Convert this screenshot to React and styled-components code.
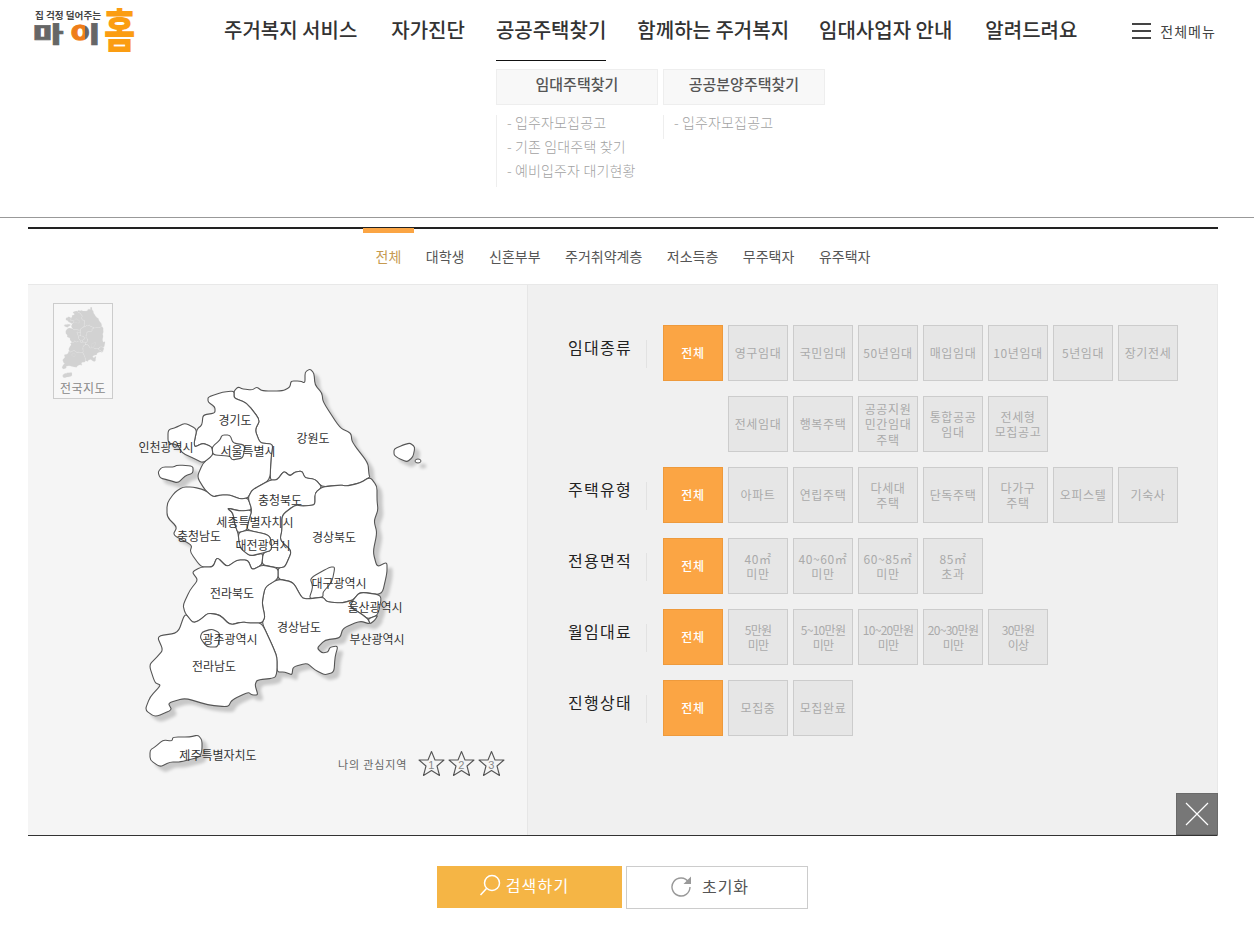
import { createGlobalStyle, styled } from "styled-components";

const GlobalStyle = createGlobalStyle`
  html, body {
    margin: 0;
    padding: 0;
    background: #fff;
    font-family: "Noto Sans CJK KR", "Noto Sans", sans-serif;
  }
  * { box-sizing: border-box; }
  ul { list-style: none; margin: 0; padding: 0; }
`;

const navItems = [
  { name: "주거복지 서비스", gap: 0 },
  { name: "자가진단", gap: 34 },
  { name: "공공주택찾기", gap: 31 },
  { name: "함께하는 주거복지", gap: 31 },
  { name: "임대사업자 안내", gap: 30 },
  { name: "알려드려요", gap: 33 },
];
const subMenus = [
  { title: "임대주택찾기", items: ["입주자모집공고", "기존 임대주택 찾기", "예비입주자 대기현황"] },
  { title: "공공분양주택찾기", items: ["입주자모집공고"] },
];
const tabs = ["전체", "대학생", "신혼부부", "주거취약계층", "저소득층", "무주택자", "유주택자"];

const filters = [
  { label: "임대종류", options: ["전체", "영구임대", "국민임대", "50년임대", "매입임대", "10년임대", "5년임대", "장기전세", "전세임대", "행복주택", "공공지원\n민간임대\n주택", "통합공공\n임대", "전세형\n모집공고"] },
  { label: "주택유형", options: ["전체", "아파트", "연립주택", "다세대\n주택", "단독주택", "다가구\n주택", "오피스텔", "기숙사"] },
  { label: "전용면적", options: ["전체", "40㎡\n미만", "40~60㎡\n미만", "60~85㎡\n미만", "85㎡\n초과"] },
  { label: "월임대료", tight: true, options: ["전체", "5만원\n미만", "5~10만원\n미만", "10~20만원\n미만", "20~30만원\n미만", "30만원\n이상"] },
  { label: "진행상태", options: ["전체", "모집중", "모집완료"] },
];

// region outlines, in page coordinates
const regions = [
  "234,391 238,387 243,389 252,390 257,387 262,391 283,391 290,387 291,381 300,381 305,383 305,372 310,369 314,373 315,385 322,393 323,402 340,428 351,433 352,442 368,463 369,475 370,477 360,483 347,486 340,485 322,487 315,479 305,478 302,471 295,472 290,476 284,471 277,480 270,480 271,458 273,444 260,443 255,430 260,420 247,403 234,398",
  "234,391 234,398 247,403 260,420 255,430 260,443 273,444 271,458 270,480 252,490 248,498 240,499 230,495 220,495 213,497 205,490 197,477 203,463 213,455 212,447 203,443 195,447 194,443 197,429 202,425 203,415 215,413 215,407 208,402 208,397 223,392",
  "168,443 168,430 177,427 185,423 197,429 194,443 195,447 203,443 212,447 213,455 203,463 193,458 182,453 178,445",
  "212,447 220,440 222,435 230,435 233,443 245,445 243,458 232,460 230,456 213,455",
  "158,472 162,467 173,467 178,465 193,466 193,473 185,476 178,483 168,480 160,478",
  "205,490 193,487 183,487 175,492 167,503 167,517 177,527 173,535 192,545 190,552 201,567 213,567 217,557 227,567 237,560 248,560 252,570 262,565 263,553 250,556 240,548 238,533 235,525 233,513 227,508 240,511 252,510 248,498 240,499 230,495 220,495 213,497",
  "270,480 277,480 284,471 290,476 295,472 302,471 305,478 315,479 322,487 315,493 315,505 303,506 295,505 282,515 282,530 280,540 292,551 285,567 278,568 262,565 263,553 272,550 270,535 247,530 248,523 252,510 248,498 252,490",
  "227,508 240,511 252,510 248,523 247,530 238,533 235,525 233,513",
  "247,530 270,535 272,550 263,553 250,556 240,548 238,533",
  "322,487 340,485 347,486 360,483 370,477 377,486 377,500 378,510 374,521 377,533 373,552 377,567 387,562 387,573 382,595 360,592 353,600 342,603 327,602 323,597 308,599 302,598 293,582 278,579 278,568 285,567 292,551 280,540 282,530 282,515 295,505 303,506 315,505 315,493",
  "309,599 313,587 310,578 330,567 335,567 332,582 323,592 323,597",
  "353,600 360,592 382,595 378,615 368,619 360,613 350,607",
  "368,619 378,615 375,620 370,624",
  "278,579 293,582 302,598 308,599 323,597 327,602 342,603 353,600 350,607 360,613 368,619 370,624 360,621 343,628 340,638 325,640 317,648 322,653 328,652 330,647 338,646 335,657 334,672 325,675 315,670 307,663 293,667 292,675 285,672 277,672 277,657 273,647 262,623 265,617 262,603 265,587",
  "201,567 213,567 217,557 227,567 237,560 248,560 252,570 262,565 278,568 278,579 265,587 262,603 265,617 262,623 250,623 242,622 230,625 220,615 208,613 200,620 193,623 185,613 183,605 190,590 198,580 192,572",
  "185,613 193,623 200,620 208,613 220,615 230,625 242,622 250,623 262,623 273,647 277,657 277,672 275,678 257,680 255,685 258,695 252,695 248,692 232,700 228,707 208,705 185,698 168,703 172,710 155,717 145,710 150,697 161,685 155,683 149,665 157,657 163,650 157,636 178,633",
  "202,632 212,629 220,633 218,647 207,647 200,638",
  "150,750 155,747 163,740 172,741 173,737 190,737 198,735 202,740 202,750 200,757 180,762 170,762 160,767 150,760",
  "394,449 403,445 410,443 415,447 413,457 407,462 398,458 394,455",
];

// rounds each corner a little so the borders read as a drawn map
function smoothPath(points) {
  const pts = points.split(" ").map((p) => p.split(",").map(Number));
  const along = (a, b, t) => [a[0] + (b[0] - a[0]) * t, a[1] + (b[1] - a[1]) * t].map((v) => v.toFixed(1)).join(" ");
  let d = "";
  pts.forEach((cur, i) => {
    const prev = pts[(i - 1 + pts.length) % pts.length];
    const next = pts[(i + 1) % pts.length];
    d += `${i === 0 ? "M" : "L"}${along(cur, prev, 0.3)}Q${cur[0]} ${cur[1]} ${along(cur, next, 0.3)}`;
  });
  return d + "Z";
}

const mapLabels = [
  ["경기도", 235, 419], ["강원도", 313, 437], ["인천광역시", 166, 446], ["서울특별시", 248, 450],
  ["충청북도", 280, 499], ["세종특별자치시", 255, 521], ["충청남도", 199, 535], ["대전광역시", 263, 544],
  ["경상북도", 334, 536], ["대구광역시", 339, 582], ["울산광역시", 375, 606], ["전라북도", 232, 592],
  ["경상남도", 299, 626], ["부산광역시", 377, 638], ["광주광역시", 230, 638], ["전라남도", 214, 665],
  ["제주특별자치도", 218, 754],
];

export default function App() {
  return (
    <>
      <GlobalStyle />
      <Header>
        <Logo />
        <Nav>
          {navItems.map((item, i) => (
            <NavItem key={item.name} $active={i === 2} $gap={item.gap}>
              {item.name}
              {i === 2 && <SubMenu />}
            </NavItem>
          ))}
        </Nav>
        <AllMenu>
          <Burger><i /><i /><i /></Burger>
          전체메뉴
        </AllMenu>
      </Header>

      <Main>
        <Tabs>
          {tabs.map((t, i) => (
            <Tab key={t} $active={i === 0}>{t}</Tab>
          ))}
        </Tabs>
        <Panels>
          <MapPanel>
            <MiniMap>
              <svg width="45" height="72" viewBox="145 369 243 398">
                {regions.slice(0, -1).map((p) => (
                  <path key={p} d={smoothPath(p)} fill="#d2d2d2" stroke="#e6e6e6" strokeWidth="1.2" />
                ))}
              </svg>
              전국지도
            </MiniMap>
            <MapSvg viewBox="28 285 499 550">
              <MapShapes>
                {regions.map((p) => (
                  <path key={p} d={smoothPath(p)} fill="#fff" stroke="#555" strokeWidth="1.1" />
                ))}
                <ellipse cx="418" cy="461" rx="3" ry="2" fill="#fff" stroke="#555" strokeWidth="1" />
              </MapShapes>
              {mapLabels.map(([name, x, y]) => (
                <MapLabel key={name} x={x} y={y}>{name}</MapLabel>
              ))}
            </MapSvg>
            <Interest>
              나의 관심지역
              <Stars>
                {[1, 2, 3].map((n) => <StarMark key={n} n={n} />)}
              </Stars>
            </Interest>
          </MapPanel>

          <FilterPanel>
            {filters.map((f) => (
              <FilterRow key={f.label}>
                <FilterLabel>{f.label}</FilterLabel>
                <Options>
                  {f.options.map((o, i) => (
                    <Option key={o} $active={i === 0} $tight={f.tight && i > 0}>{o}</Option>
                  ))}
                </Options>
              </FilterRow>
            ))}
            <CloseButton aria-label="닫기">
              <svg width="24" height="24" viewBox="0 0 24 24">
                <path d="M1 1L23 23M23 1L1 23" stroke="#fff" strokeWidth="1.2" />
              </svg>
            </CloseButton>
          </FilterPanel>
        </Panels>

        <Actions>
          <SearchButton>
            <svg width="22" height="22" viewBox="0 0 22 22" fill="none" stroke="#fff" strokeWidth="1.5">
              <circle cx="13" cy="9" r="7.5" />
              <path d="M7.5 14.5L1.5 21" />
            </svg>
            검색하기
          </SearchButton>
          <ResetButton>
            <svg width="22" height="22" viewBox="0 0 22 22" fill="none">
              <path d="M18.5 7A9 9 0 1 0 20 12" stroke="#999" strokeWidth="1.4" />
              <path d="M21 1.5V9H13.5Z" fill="#999" />
            </svg>
            초기화
          </ResetButton>
        </Actions>
      </Main>
    </>
  );
}

function Logo() {
  return (
    <LogoMark width="104" height="52" viewBox="0 0 104 52">
      <defs>
        <linearGradient id="logoI" x1="0" x2="1" y1="0" y2="0">
          <stop offset="0.5" stopColor="#ee7d1a" />
          <stop offset="0.5" stopColor="#666" />
        </linearGradient>
      </defs>
      <LogoCaption x="1" y="14" textLength="66" lengthAdjust="spacingAndGlyphs">집 걱정 덜어주는</LogoCaption>
      <LogoWord transform="translate(-1 37) scale(1.5 1)" fill="#666" stroke="#666">마</LogoWord>
      <LogoWord transform="translate(36 37) scale(1.5 1)" fill="url(#logoI)" stroke="url(#logoI)">이</LogoWord>
      <LogoHome transform="translate(70 42) scale(1 1.35)">홈</LogoHome>
    </LogoMark>
  );
}

function SubMenu() {
  return (
    <SubMenuWrap>
      {subMenus.map((m) => (
        <SubColumn key={m.title}>
          <SubTitle>{m.title}</SubTitle>
          <SubList>
            {m.items.map((it) => <SubItem key={it}>- {it}</SubItem>)}
          </SubList>
        </SubColumn>
      ))}
    </SubMenuWrap>
  );
}

function StarMark({ n }) {
  return (
    <StarWrap>
      <svg width="27" height="27" viewBox="0 0 27 27">
        <path d="M13.5 1.5L17 10H26L19 16L21.5 25.5L13.5 20.5L5.5 25.5L8 16L1 10H10Z" fill="none" stroke="#555" strokeWidth="1.1" strokeLinejoin="round" />
      </svg>
      <StarNum>{n}</StarNum>
    </StarWrap>
  );
}

const Header = styled.header`
  display: flex;
  align-items: flex-start;
  width: calc(100% - 2px);
  height: 218px;
  padding: 5px 0 0 34px;
  border-bottom: 1px solid #999;
`;

const LogoMark = styled.svg`
  flex: none;
  display: block;
  overflow: visible;
`;

const LogoCaption = styled.text`
  font-size: 9px;
  font-weight: 700;
  fill: #444;
`;

const LogoWord = styled.text`
  font-size: 22px;
  font-weight: 900;
  stroke-width: 0.7px;
`;

const LogoHome = styled.text`
  font-size: 34px;
  font-weight: 900;
  fill: #fb9d12;
`;

const Nav = styled.ul`
  display: flex;
  margin-left: 86px;
`;

const NavItem = styled.li`
  position: relative;
  height: 56px;
  margin-left: ${(p) => p.$gap}px;
  padding-top: 8px;
  font-size: 20px;
  font-weight: 500;
  line-height: 34px;
  color: #333;
  white-space: nowrap;
  ${(p) => p.$active && "border-bottom: 1px solid #111;"}
`;

const SubMenuWrap = styled.div`
  position: absolute;
  top: 64px;
  left: 0;
  display: flex;
  gap: 5px;
`;

const SubColumn = styled.div`
  width: 162px;
`;

const SubTitle = styled.div`
  height: 36px;
  background: #f8f8f8;
  border: 1px solid #eee;
  font-size: 15px;
  font-weight: 500;
  line-height: 28px;
  text-align: center;
  color: #555;
`;

const SubList = styled.ul`
  margin-top: 10px;
  padding-left: 10px;
  border-left: 1px solid #eee;
`;

const SubItem = styled.li`
  height: 24px;
  font-size: 14px;
  font-weight: 300;
  line-height: 14px;
  letter-spacing: 0.15px;
  color: #a2a2a2;
`;

const AllMenu = styled.div`
  display: flex;
  align-items: center;
  gap: 9px;
  margin-left: 55px;
  padding-top: 11px;
  font-size: 14px;
  letter-spacing: 1px;
  line-height: 30px;
  color: #444;
`;

const Burger = styled.span`
  display: flex;
  flex-direction: column;
  gap: 5px;
  width: 19px;
  i {
    display: block;
    height: 2px;
    background: #444;
  }
`;

const Main = styled.main`
  width: 1190px;
  margin: 9px 0 0 28px;
  border-top: 2px solid #222;
`;

const Tabs = styled.ul`
  display: flex;
  justify-content: center;
  height: 55px;
`;

const Tab = styled.li`
  margin-top: -1px;
  padding: 5px 12.25px 0;
  height: 56px;
  font-size: 14px;
  line-height: 46px;
  color: ${(p) => (p.$active ? "#c69a50" : "#555")};
  border-top: ${(p) => (p.$active ? "5px solid #fba544" : "0")};
  ${(p) => p.$active && "padding-top: 0;"}
`;

const Panels = styled.div`
  display: grid;
  grid-template-columns: 500px 1fr;
  height: 552px;
  border-top: 1px solid #e8e8e8;
  border-right: 1px solid #e8e8e8;
  border-bottom: 1px solid #333;
`;

const MapPanel = styled.section`
  position: relative;
  background: #f5f5f5;
  border-right: 1px solid #e6e6e6;
`;

const MiniMap = styled.button`
  position: absolute;
  top: 18px;
  left: 25px;
  display: flex;
  flex-direction: column;
  align-items: center;
  width: 60px;
  height: 96px;
  padding: 3px 0 0;
  background: #f7f7f7;
  border: 1px solid #ccc;
  font-family: inherit;
  font-size: 12px;
  line-height: 20px;
  letter-spacing: 0.5px;
  color: #888;
`;

const MapSvg = styled.svg`
  display: block;
  width: 499px;
  height: 550px;
`;

const MapShapes = styled.g`
  filter: drop-shadow(5px 5px 1.5px rgba(0, 0, 0, 0.18));
`;

const MapLabel = styled.text`
  font-size: 12px;
  fill: #333;
  text-anchor: middle;
  dominant-baseline: central;
`;

const Interest = styled.div`
  position: absolute;
  left: 310px;
  top: 465px;
  display: flex;
  align-items: center;
  gap: 11px;
  font-size: 11px;
  letter-spacing: 0.85px;
  color: #666;
`;

const Stars = styled.span`
  display: flex;
  gap: 3px;
`;

const StarWrap = styled.span`
  position: relative;
  display: block;
  width: 27px;
  height: 27px;
  svg { display: block; }
`;

const StarNum = styled.span`
  position: absolute;
  inset: 2px 0 0;
  font-family: "Liberation Sans", sans-serif;
  font-size: 11px;
  line-height: 27px;
  text-align: center;
  color: #888;
`;

const FilterPanel = styled.section`
  position: relative;
  display: flex;
  flex-direction: column;
  gap: 15px;
  padding: 40px 0 0 40px;
  background: #f0f0f0;
`;

const FilterRow = styled.div`
  display: flex;
  align-items: flex-start;
`;

const FilterLabel = styled.div`
  flex: none;
  width: 79px;
  height: 28px;
  margin: 15px 16px 0 0;
  border-right: 1px solid #e2e2e2;
  font-size: 16px;
  line-height: 14px;
  letter-spacing: 1.3px;
  color: #222;
`;

const Options = styled.div`
  display: grid;
  grid-template-columns: repeat(8, 60px);
  gap: 15px 5px;
  & > :nth-child(9) { grid-column: 2; }
`;

const Option = styled.button`
  display: flex;
  align-items: center;
  justify-content: center;
  height: 56px;
  padding: 0;
  background: ${(p) => (p.$active ? "#fba544" : "#e6e6e6")};
  border: 1px solid ${(p) => (p.$active ? "#ee9a3c" : "#ccc")};
  font-family: inherit;
  font-size: 12px;
  font-weight: ${(p) => (p.$active ? 500 : 400)};
  line-height: 15.5px;
  letter-spacing: ${(p) => (p.$tight ? "-0.7px" : "0.6px")};
  white-space: pre-line;
  color: ${(p) => (p.$active ? "#fff" : "#aaa")};
`;

const CloseButton = styled.button`
  position: absolute;
  right: -1px;
  bottom: 0;
  display: flex;
  align-items: center;
  justify-content: center;
  width: 42px;
  height: 42px;
  padding: 0;
  background: #777;
  border: 1px solid #6a6a6a;
`;

const Actions = styled.div`
  display: flex;
  justify-content: center;
  align-items: flex-start;
  gap: 4px;
  margin-top: 30px;
  padding-right: 1px;
`;

const SearchButton = styled.button`
  display: flex;
  align-items: center;
  justify-content: center;
  gap: 5px;
  width: 185px;
  height: 42px;
  padding: 0 11px 4px 0;
  background: #f5b545;
  border: 0;
  font-family: inherit;
  font-size: 16px;
  letter-spacing: 1.2px;
  color: #fff;
`;

const ResetButton = styled.button`
  display: flex;
  align-items: center;
  justify-content: center;
  gap: 10px;
  width: 182px;
  height: 43px;
  padding: 0 15px 4px 0;
  background: #fff;
  border: 1px solid #ccc;
  font-family: inherit;
  font-size: 16px;
  letter-spacing: 1px;
  color: #555;
`;
